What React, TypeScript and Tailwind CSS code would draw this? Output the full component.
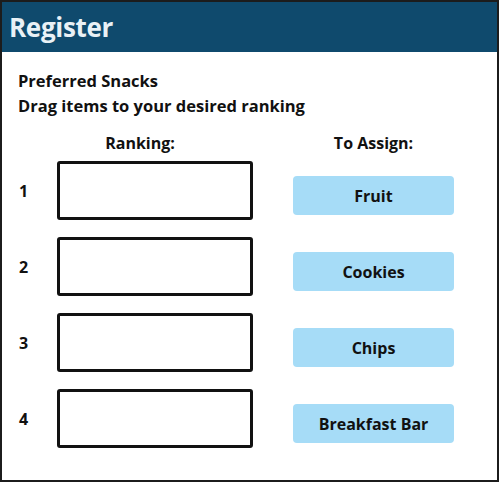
import React from "react";

const items = ["Fruit", "Cookies", "Chips", "Breakfast Bar"];

export default function App() {
  return (
    <div
      className="w-[499px] h-[482px] border-2 border-[#1c1c1c] bg-white flex flex-col text-[#111]"
      style={{ fontFamily: '"Open Sans", "Noto Sans", sans-serif' }}
    >
      <div className="h-[50px] bg-[#0f4a6d] flex items-center pl-[7px]">
        <span className="text-[26px] font-bold text-[#e9f1f6] leading-none tracking-[-0.3px]">Register</span>
      </div>
      <div className="pl-[16px] pt-[16px]">
        <div className="text-[16.5px] font-bold leading-[25px]">Preferred Snacks</div>
        <div className="text-[16.5px] font-bold leading-[25px]">Drag items to your desired ranking</div>
      </div>
      <div className="grid grid-cols-[39px_196px_40px_161px] pl-[16px] mt-[14px]">
        <div />
        <div className="text-[16px] font-bold leading-[22px] text-center pr-[30px]">Ranking:</div>
        <div />
        <div className="text-[16px] font-bold leading-[22px] text-center">To Assign:</div>
      </div>
      <div className="grid grid-cols-[39px_196px_40px_161px] gap-y-[17px] pl-[16px] mt-[7px]">
        {items.map((it, i) => (
          <React.Fragment key={it}>
            <div className="flex items-center text-[16px] font-bold h-[59px] pl-[1px]">{i + 1}</div>
            <div className="h-[59px] border-[3px] border-[#111] rounded-[3px]" />
            <div />
            <div className="mt-[15px] h-[39px] bg-[#a6dcf7] rounded-[4px] flex items-center justify-center text-[16px] font-bold">
              {it}
            </div>
          </React.Fragment>
        ))}
      </div>
    </div>
  );
}
